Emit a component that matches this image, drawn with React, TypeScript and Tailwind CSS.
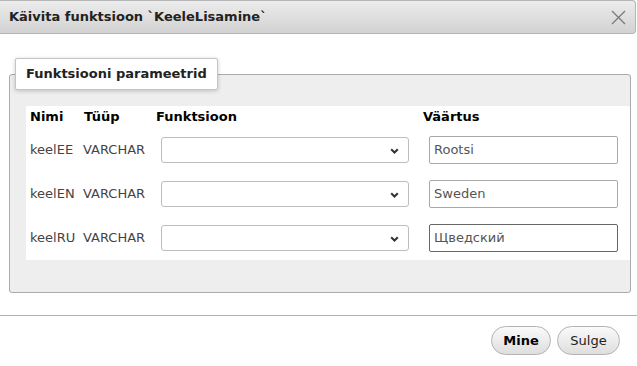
import React from 'react';

const rows = [
  { name: 'keelEE', type: 'VARCHAR', value: 'Rootsi', focused: false },
  { name: 'keelEN', type: 'VARCHAR', value: 'Sweden', focused: false },
  { name: 'keelRU', type: 'VARCHAR', value: 'Щведский', focused: true },
];

const Chevron = () => (
  <svg width="9" height="6" viewBox="0 0 9 6" className="absolute right-[9px] top-[10px]">
    <path d="M1.2 1.2 L4.5 4.5 L7.8 1.2" fill="none" stroke="#333" strokeWidth="2" />
  </svg>
);

export default function App() {
  return (
    <div
      className="w-[637px] h-[366px] bg-white overflow-hidden text-[13px] text-[#333]"
      style={{ fontFamily: '"DejaVu Sans", Verdana, sans-serif' }}
    >
      {/* Title bar */}
      <div className="w-[636px] h-[34px] flex items-center justify-between pl-[9px] pr-[9px] bg-gradient-to-b from-[#ececec] to-[#d2d2d2] border-b border-r border-t border-[#b5b5b5] rounded-br-[4px] rounded-tr-[4px]">
        <span className="font-bold text-[#222]">Käivita funktsioon `KeeleLisamine`</span>
        <svg width="15" height="15" viewBox="0 0 15 15">
          <path d="M1 1 L14 14 M14 1 L1 14" stroke="#7a7a7a" strokeWidth="1.3" />
        </svg>
      </div>

      {/* Body */}
      <div className="pt-[24px] px-[9px] h-[281px]">
        <fieldset className="border border-[#ababab] rounded-[3px] bg-[#eeeeee] pb-[32px] w-[616px]">
          <legend className="ml-[5px] h-[32px] px-[10px] flex items-center bg-white border border-[#c4c4c4] rounded-[2px] shadow-[0_1px_4px_rgba(0,0,0,0.2)] font-bold text-[#222]">
            Funktsiooni parameetrid
          </legend>
          <div className="mt-[16px] ml-[16px] w-[604px] bg-white">
            <div className="grid grid-cols-[54px_72px_267px_1fr] h-[22px] items-center font-bold text-black">
              <div className="pl-[4px]">Nimi</div>
              <div className="pl-[4px]">Tüüp</div>
              <div className="pl-[4px]">Funktsioon</div>
              <div className="pl-[4px]">Väärtus</div>
            </div>
            {rows.map((r) => (
              <div key={r.name} className="grid grid-cols-[54px_72px_267px_1fr] h-[44px] items-center text-[#444]">
                <div className="pl-[4px]">{r.name}</div>
                <div className="pl-[3px]">{r.type}</div>
                <div className="pl-[9px]">
                  <div className="relative w-[248px] h-[26px] border border-[#bdbdbd] rounded-[3px] bg-white">
                    <Chevron />
                  </div>
                </div>
                <div className="pl-[10px]">
                  <div
                    className={`w-[189px] h-[28px] border rounded-[2px] bg-white flex items-center pl-[4px] text-[#555] ${
                      r.focused ? 'border-[#666666]' : 'border-[#a9a9a9]'
                    }`}
                  >
                    {r.value}
                  </div>
                </div>
              </div>
            ))}
          </div>
        </fieldset>
      </div>

      {/* Footer */}
      <div className="border-t border-[#b0b0b0] flex justify-end gap-[6px] pt-[10px] pr-[17px]">
        <button className="w-[60px] h-[29px] rounded-full border border-[#b3b3b3] bg-gradient-to-b from-[#fafafa] to-[#dedede] font-bold text-black">
          Mine
        </button>
        <button className="w-[63px] h-[29px] rounded-full border border-[#b3b3b3] bg-gradient-to-b from-[#fafafa] to-[#dedede] text-[#222]">
          Sulge
        </button>
      </div>
    </div>
  );
}
